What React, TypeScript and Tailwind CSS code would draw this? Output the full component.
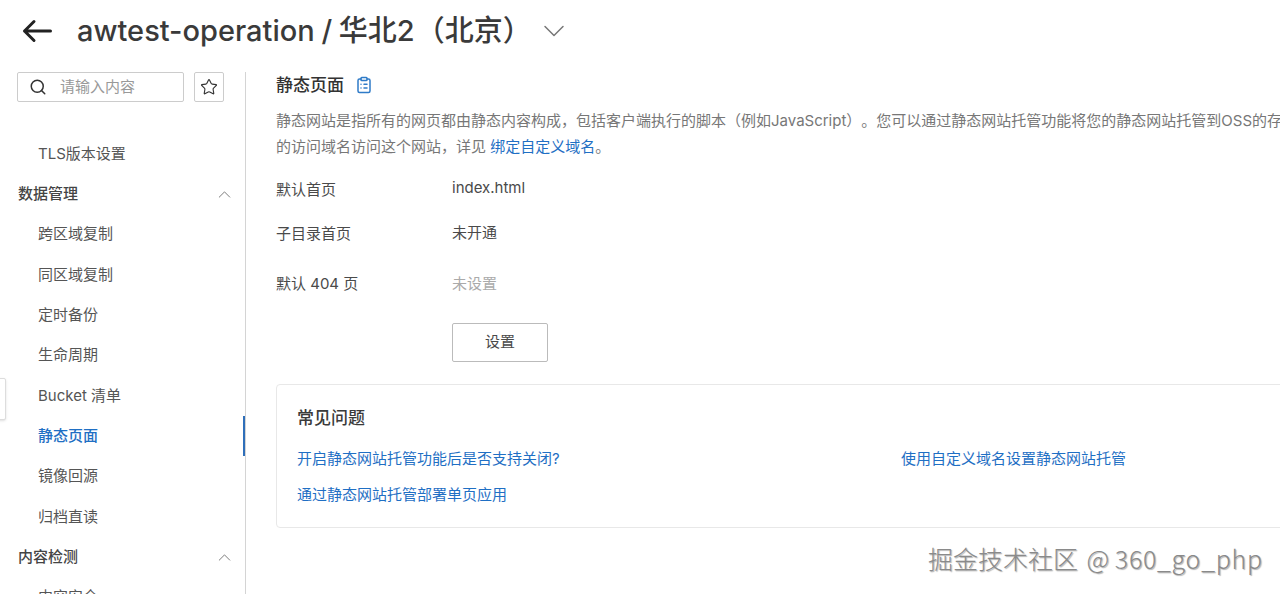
import { ChevronDown, ChevronUp, Search, Star, ClipboardList } from "lucide-react";

const font = "font-['Inter','Noto_Sans_CJK_SC',sans-serif]";

function NavItem({ label, active }: { label: string; active?: boolean }) {
  return (
    <div
      className={`relative flex h-[40.3px] shrink-0 items-center pl-[38px] text-[15px] ${
        active ? "font-medium text-[#1f6fc4]" : "text-[#555]"
      }`}
    >
      {label}
      {active && <span className="absolute right-0 top-0 h-full w-[2px] bg-[#2f6fba]" />}
    </div>
  );
}

function NavGroup({ label }: { label: string }) {
  return (
    <div className="flex h-[40.3px] shrink-0 items-center justify-between pl-[18px] pr-[10px] text-[15px] font-medium text-[#444]">
      {label}
      <ChevronUp size={21} strokeWidth={1.1} className="text-[#777]" />
    </div>
  );
}

function InfoRow({
  label,
  value,
  muted,
  className,
  valueClass,
}: {
  label: string;
  value: string;
  muted?: boolean;
  className: string;
  valueClass?: string;
}) {
  return (
    <div className={`flex items-center text-[15px] ${className}`}>
      <span className="w-[176px] shrink-0 text-[#4a4a4a]">{label}</span>
      <span className={`${muted ? "text-[#aaa]" : "text-[#4a4a4a]"} ${valueClass ?? ""}`}>{value}</span>
    </div>
  );
}

export default function App() {
  return (
    <div className={`relative flex h-[594px] w-[1280px] flex-col overflow-hidden bg-white [text-spacing-trim:space-all] ${font}`}>
      <header className="flex h-[62px] shrink-0 items-center pl-[22px]">
        <svg width="30" height="24" viewBox="0 0 30 24" fill="none" stroke="#222" strokeWidth="3" strokeLinecap="round" strokeLinejoin="round">
          <path d="M28.5 12H2.5M12 2.5 2.5 12l9.5 9.5" />
        </svg>
        <h1 className="ml-[25px] whitespace-nowrap text-[29px] font-medium text-[#3a3a3a]">
          awtest-operation<span className="mx-[-1px]"> / </span>华北2<span className="ml-[1px]">（北京）</span>
        </h1>
        <ChevronDown size={36} strokeWidth={1} className="ml-[4px] text-[#777]" />
      </header>

      <div className="flex min-h-0 flex-1 pt-[10px]">
        <aside className="flex w-[246px] shrink-0 flex-col overflow-hidden border-r border-[#d4d4d4]">
          <div className="flex shrink-0 items-center pl-[17px]">
            <div className="flex h-[30px] w-[167px] items-center rounded-[2px] border border-[#ccc] pl-[11px] text-[15px] text-[#999]">
              <Search size={18} strokeWidth={2} className="mr-[13px] text-[#333]" />
              请输入内容
            </div>
            <div className="ml-[10px] flex h-[30px] w-[30px] items-center justify-center rounded-[2px] border border-[#ccc]">
              <Star size={18} strokeWidth={1.5} className="text-[#333]" />
            </div>
          </div>
          <div className="h-[32px] shrink-0" />
          <NavItem label="TLS版本设置" />
          <NavGroup label="数据管理" />
          <NavItem label="跨区域复制" />
          <NavItem label="同区域复制" />
          <NavItem label="定时备份" />
          <NavItem label="生命周期" />
          <NavItem label="Bucket 清单" />
          <NavItem label="静态页面" active />
          <NavItem label="镜像回源" />
          <NavItem label="归档直读" />
          <NavGroup label="内容检测" />
          <NavItem label="内容安全" />
        </aside>

        <main className="min-w-0 flex-1 overflow-hidden pl-[30px]">
          <div className="flex items-center gap-[11px]">
            <h2 className="text-[17px] font-medium leading-[26px] text-[#333]">静态页面</h2>
            <ClipboardList size={18} strokeWidth={2} className="text-[#2f7bc8]" />
          </div>
          <div className="mt-[10px] whitespace-nowrap text-[15px] leading-[26px] text-[#777]">
            <p>静态网站是指所有的网页都由静态内容构成，包括客户端执行的脚本（例如JavaScript）。您可以通过静态网站托管功能将您的静态网站托管到OSS的存</p>
            <p>
              的访问域名访问这个网站，详见 <span className="text-[#1f6fc4]">绑定自定义域名</span>。
            </p>
          </div>
          <InfoRow label="默认首页" value="index.html" valueClass="mb-[4px]" className="mt-[18px] h-[24px]" />
          <InfoRow label="子目录首页" value="未开通" valueClass="mb-[2px]" className="mt-[20px] h-[24px]" />
          <InfoRow label="默认 404 页" value="未设置" muted className="mt-[26px] h-[24px]" />
          <button className="ml-[176px] mt-[27px] flex h-[39px] w-[96px] items-center justify-center rounded-[2px] border border-[#bbb] text-[15px] text-[#4a4a4a]">
            设置
          </button>
          <section className="mt-[22px] h-[144px] w-[1100px] rounded-[4px] border border-[#e8e8e8] px-[20px] pt-[20px]">
            <h3 className="text-[17px] font-medium leading-[26px] text-[#3a3a3a]">常见问题</h3>
            <div className="mt-[17px] grid grid-cols-[604px_1fr] gap-y-[14px] text-[15px] leading-[22px] text-[#1f6fc4]">
              <span>开启静态网站托管功能后是否支持关闭?</span>
              <span>使用自定义域名设置静态网站托管</span>
              <span>通过静态网站托管部署单页应用</span>
            </div>
          </section>
        </main>
      </div>

      <div className="absolute left-[-6px] top-[378px] h-[42px] w-[12px] rounded-[2px] border border-[#ddd] bg-white shadow-sm" />
      <div className="absolute left-[928px] top-[541px] whitespace-nowrap font-['Noto_Sans_CJK_SC',sans-serif] text-[25px] font-light leading-[34px] text-[#8a8a8a] [text-shadow:1px_1px_1px_rgba(0,0,0,0.3),-1px_-1px_0_rgba(255,255,255,0.9)]">
        掘金技术社区<span className="ml-[3px]"> @ </span><span className="tracking-[0.7px]">360_go_php</span>
      </div>
    </div>
  );
}
